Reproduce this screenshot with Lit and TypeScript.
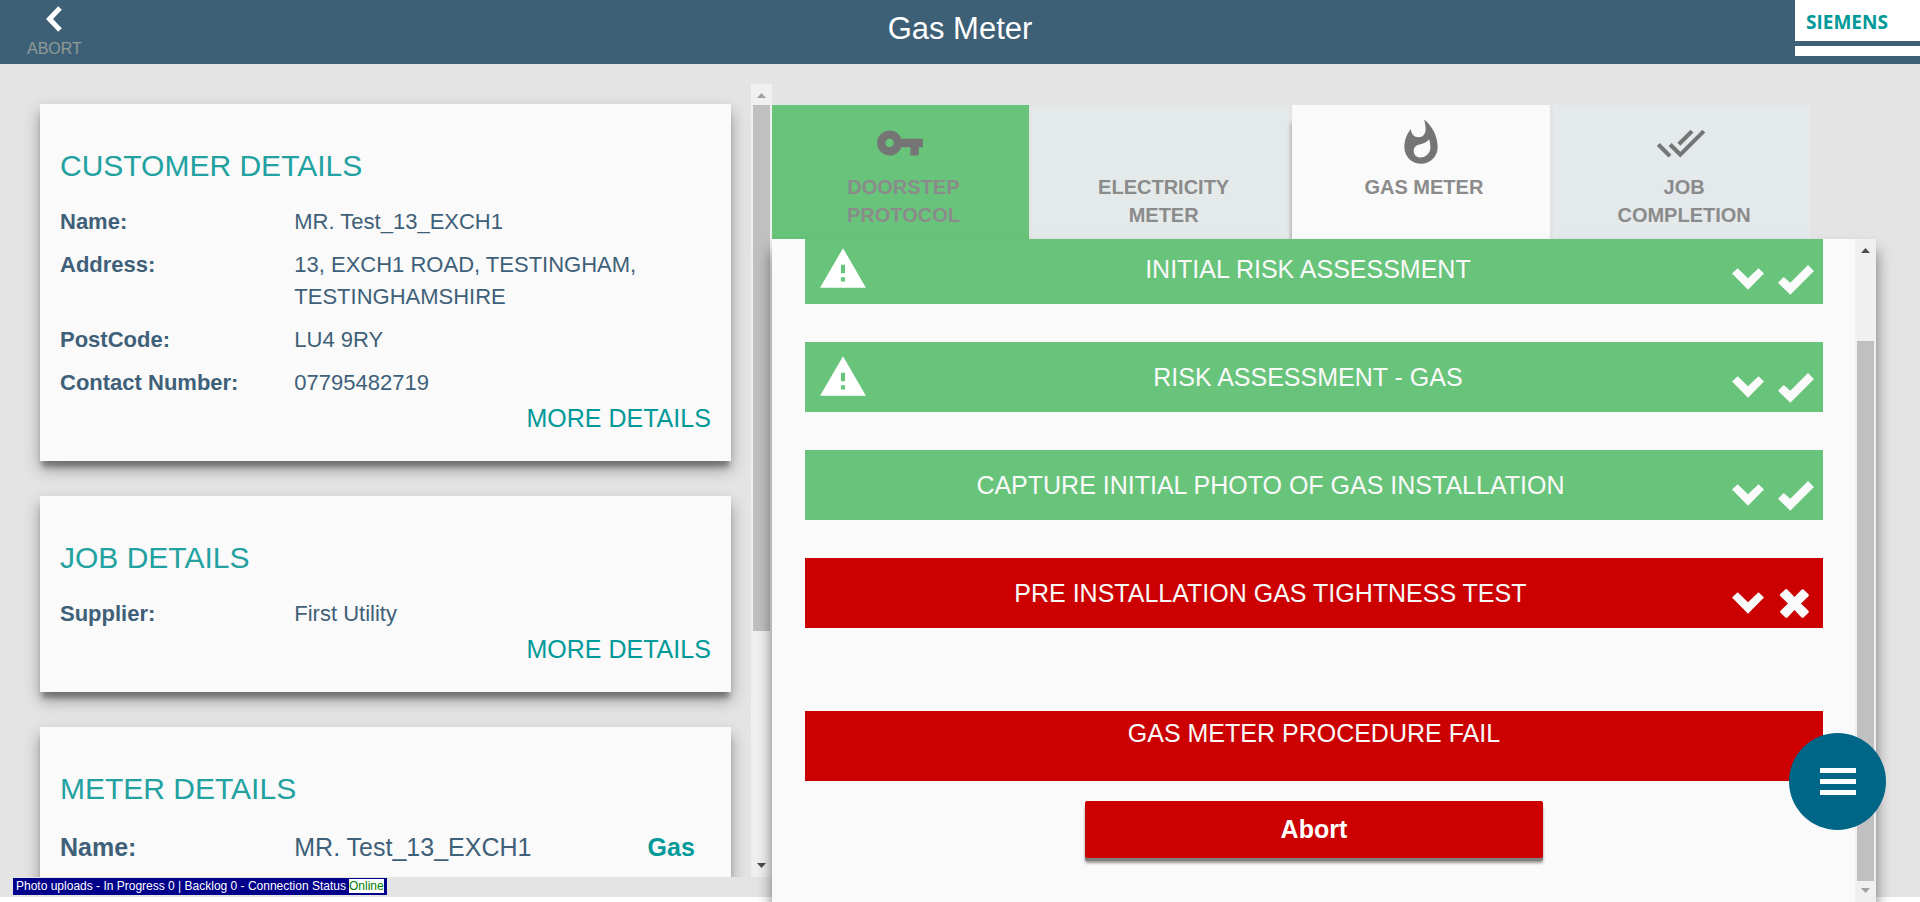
import { LitElement, html, css, svg, nothing } from "lit";
import { customElement, property, state } from "lit/decorators.js";
import { classMap } from "lit/directives/class-map.js";

type Status = "pass" | "fail";

interface Step {
  title: string;
  status: Status;
  warning: boolean;
}

interface Tab {
  label: string;
  icon: string;
  tone: string;
}

const TAB_ICONS: Record<string, string> = {
  key: "M12.65 10C11.83 7.67 9.61 6 7 6c-3.31 0-6 2.69-6 6s2.69 6 6 6c2.61 0 4.83-1.67 5.65-4H17v4h4v-4h2v-4H12.65zM7 14c-1.1 0-2-.9-2-2s.9-2 2-2 2 .9 2 2-.9 2-2 2z",
  flame:
    "M13.5.67s.74 2.65.74 4.8c0 2.06-1.35 3.73-3.41 3.73-2.07 0-3.63-1.67-3.63-3.73l.03-.36C5.21 7.51 4 10.62 4 14c0 4.42 3.58 8 8 8s8-3.58 8-8C20 8.61 17.41 3.8 13.5.67zM11.71 19c-1.78 0-3.22-1.4-3.22-3.14 0-1.62 1.05-2.76 2.81-3.12 1.77-.36 3.6-1.21 4.62-2.58.39 1.29.59 2.65.59 4.04 0 2.65-2.15 4.8-4.8 4.8z",
  done: "M18 7l-1.41-1.41-6.34 6.34 1.41 1.41L18 7zm4.24-1.41L11.66 16.17 7.48 12l-1.41 1.41L11.66 19l12-12-1.42-1.41zM.41 13.41L6 19l1.41-1.41L1.83 12 .41 13.41z",
};

@customElement("scroll-rail")
export class ScrollRail extends LitElement {
  @property() start = "top";

  static styles = css`
    :host {
      display: flex;
      flex-direction: column;
      flex: 0 0 21px;
      background: #f0f0f0;
    }
    .arrow {
      flex: 0 0 21px;
      display: block;
      fill: #4d4d4d;
    }
    .arrow.off {
      fill: #a0a0a0;
    }
    .track {
      flex: 1;
      display: flex;
      flex-direction: column;
      padding: 0 2px;
    }
    .thumb {
      background: #c0c0c0;
      flex: 0 0 70%;
    }
    .track.end {
      justify-content: flex-end;
    }
    .track.end .thumb {
      flex-basis: 87%;
    }
  `;

  render() {
    const end = this.start === "end";
    return html`
      <svg class=${classMap({ arrow: true, off: !end })} viewBox="0 0 21 21" width="21" height="21" aria-hidden="true">
        <path d="M6 14L10.500 9L15 14z" />
      </svg>
      <div class=${classMap({ track: true, end })}><div class="thumb"></div></div>
      <svg class=${classMap({ arrow: true, off: end })} viewBox="0 0 21 21" width="21" height="21" aria-hidden="true">
        <path d="M6 7L10.500 12L15 7z" />
      </svg>
    `;
  }
}

@customElement("detail-card")
export class DetailCard extends LitElement {
  @property() heading = "";
  @property({ type: Array }) rows: [string, string][] = [];
  @property() tag = "";

  static styles = css`
    :host {
      display: block;
      background: #fafafa;
      color: #3e6078;
      padding: 44px 20px 28px;
      box-shadow: 0 8px 5px -2px rgba(0, 0, 0, 0.3), 0 8px 15px rgba(0, 0, 0, 0.34);
    }
    h2 {
      margin: 0 0 22px;
      font-size: 30px;
      line-height: 36px;
      font-weight: 400;
      color: #22a1a1;
    }
    dl {
      margin: 0;
      display: flex;
      flex-direction: column;
      gap: 11px;
      font-size: 22px;
      line-height: 32px;
    }
    .row {
      display: flex;
    }
    dt {
      flex: 0 0 36%;
      font-weight: 700;
    }
    dd {
      flex: 1;
      margin: 0;
    }
    .large {
      font-size: 25px;
      padding-top: 2px;
    }
    .tag {
      flex: none;
      font-weight: 700;
      color: #099;
      padding-right: 16px;
    }
    .more {
      display: flex;
      justify-content: flex-end;
      padding-top: 4px;
      font-size: 25px;
      line-height: 30px;
    }
    a {
      color: #099;
      text-decoration: none;
    }
  `;

  render() {
    return html`
      <h2>${this.heading}</h2>
      <dl class=${this.tag ? "large" : ""}>
        ${this.rows.map(
          ([label, value]) => html`<div class="row">
            <dt>${label}</dt>
            <dd>${value}</dd>
            ${this.tag ? html`<dd class="tag">${this.tag}</dd>` : nothing}
          </div>`
        )}
      </dl>
      ${this.tag ? nothing : html`<div class="more"><a href="#details">MORE DETAILS</a></div>`}
    `;
  }
}

@customElement("app-root")
export class AppRoot extends LitElement {
  @state() private activeTab = 2;
  @state() private open = -1;

  private tabs: Tab[] = [
    { label: "DOORSTEP PROTOCOL", icon: "key", tone: "complete" },
    { label: "ELECTRICITY METER", icon: "", tone: "" },
    { label: "GAS METER", icon: "flame", tone: "" },
    { label: "JOB COMPLETION", icon: "done", tone: "cool" },
  ];

  private steps: Step[] = [
    { title: "INITIAL RISK ASSESSMENT", status: "pass", warning: true },
    { title: "RISK ASSESSMENT - GAS", status: "pass", warning: true },
    { title: "CAPTURE INITIAL PHOTO OF GAS INSTALLATION", status: "pass", warning: false },
    { title: "PRE INSTALLATION GAS TIGHTNESS TEST", status: "fail", warning: false },
  ];

  static styles = css`
    :host {
      display: flex;
      flex-direction: column;
      height: 100vh;
      overflow: hidden;
      font-family: "Liberation Sans", Arial, sans-serif;
      background: #fff;
    }
    button {
      font: inherit;
      border: 0;
      margin: 0;
      padding: 0;
      cursor: pointer;
    }
    svg {
      display: block;
    }
    header {
      flex: 0 0 64px;
      display: grid;
      grid-template-columns: 1fr auto 1fr;
      background: #3e6077;
      color: #fff;
    }
    .back {
      justify-self: start;
      align-self: start;
      display: flex;
      flex-direction: column;
      align-items: center;
      gap: 7px;
      padding: 6px 0 0 27px;
      background: none;
      color: #8f9a97;
      font-size: 16px;
      line-height: 20px;
    }
    .back svg {
      fill: none;
      stroke: #fff;
      stroke-width: 5;
    }
    h1 {
      margin: 0;
      font-size: 31px;
      line-height: 58px;
      font-weight: 400;
    }
    .logo {
      justify-self: end;
      align-self: start;
      width: 125px;
      display: flex;
      flex-direction: column;
      gap: 5px;
    }
    .logo .name {
      background: #fff;
      color: #099;
      font: 700 19px/45px "Open Sans", "Noto Sans", sans-serif;
      height: 41px;
      padding-left: 11px;
    }
    .logo .foot {
      background: #fff;
      height: 10px;
    }
    main {
      flex: 1;
      min-height: 0;
      display: flex;
      background: linear-gradient(#fff, #fff) bottom / 100% 5px no-repeat, #e4e4e4;
    }
    .side {
      flex: 0 0 40.2%;
      box-sizing: border-box;
      display: flex;
      margin: 20px 0 25px;
      overflow: hidden;
    }
    .cards {
      flex: 1;
      display: flex;
      flex-direction: column;
      gap: 35px;
      padding: 20px 20px 0 40px;
    }
    .cards detail-card {
      flex: none;
    }
    .work {
      flex: 1;
      display: flex;
      flex-direction: column;
      padding: 41px 44px 0 0;
    }
    .tabs {
      width: 94%;
      display: grid;
      grid-template-columns: repeat(4, 1fr);
      gap: 3px;
    }
    .tab {
      display: flex;
      flex-direction: column;
      align-items: center;
      height: 134px;
      padding-top: 13px;
      gap: 5px;
      background: #e4eaea;
      color: #8b8b8b;
      font-size: 20px;
      line-height: 28px;
      font-weight: 700;
    }
    .tab svg,
    .tab .blank {
      width: 50px;
      height: 50px;
      fill: #757575;
    }
    .tab .label {
      padding: 0 37px 0 43px;
    }
    .tab.complete {
      background: #68c47a;
    }
    .tab.cool {
      background: #e4e9eb;
    }
    .tab.active {
      background: #fafafa;
      box-shadow: -3px 16px 4px -2px rgba(0, 0, 0, 0.25);
    }
    .panel {
      flex: 1;
      min-height: 0;
      display: flex;
      background: #fafafa;
      box-shadow: 0 12px 14px rgba(0, 0, 0, 0.5);
    }
    .view {
      flex: 1;
      overflow: hidden;
      padding: 0 32px 0 33px;
    }
    .steps {
      list-style: none;
      margin: -5px 0 83px;
      padding: 0;
      display: flex;
      flex-direction: column;
      gap: 38px;
    }
    .step {
      width: 100%;
      height: 70px;
      display: flex;
      align-items: center;
      padding: 0 9px 0 4px;
      color: #fafafa;
      font-size: 25px;
      line-height: 30px;
      background: #68c47a;
    }
    .step.fail,
    .verdict,
    .abort {
      background: #c00;
    }
    .step .warn {
      flex: 0 0 75px;
      padding-left: 9px;
      box-sizing: border-box;
      fill: #fff;
    }
    .step .title {
      flex: 1;
    }
    .marks {
      display: flex;
      gap: 14px;
      align-self: flex-end;
      padding-bottom: 8px;
      fill: #fafafa;
    }
    .verdict {
      margin: 0 0 20px;
      box-sizing: border-box;
      height: 70px;
      padding-top: 7px;
      color: #fafafa;
      text-align: center;
      font-size: 25px;
      line-height: 30px;
    }
    .abort {
      display: block;
      margin: 0 auto;
      width: 45%;
      height: 57px;
      border-radius: 2px;
      color: #fff;
      font-size: 25px;
      font-weight: 700;
      box-shadow: 0 3px 0 #808080, 0 5px 3px rgba(0, 0, 0, 0.4);
    }
    .menu {
      position: fixed;
      right: 34px;
      bottom: 72px;
      width: 97px;
      height: 97px;
      border-radius: 50%;
      background: #006687;
      display: grid;
      place-items: center;
      fill: #fff;
    }
    .status {
      position: fixed;
      left: 13px;
      bottom: 7px;
      display: flex;
      gap: 3px;
      padding: 1px 3px 2px;
      background: #00008b;
      color: #fff;
      font-size: 12px;
      line-height: 14px;
    }
    .online {
      background: #fff;
      color: green;
    }
  `;

  private mark(status: Status) {
    return status === "pass"
      ? svg`<path d="M0 18.700L5.700 13L12.300 18.700L30 1L36 7L12.300 30.700z" />`
      : svg`<path d="M2 6.200L7.500 1.200Q8.500 .700 9.500 1.700L16.500 9L23.500 1.700Q24.500 .700 25.500 1.600L30.500 6.200Q31.300 7.200 30.500 8.200L23 15.500L30.500 22.800Q31.300 23.800 30.500 24.700L25.500 29.500Q24.500 30.300 23.500 29.400L16.500 22L9.500 29.400Q8.500 30.300 7.500 29.500L2.500 24.700Q1.700 23.800 2.500 22.800L10 15.500L2.500 8.200Q1.500 7.200 2 6.200z" />`;
  }

  private renderStep(step: Step, i: number) {
    return html`<li>
      <button
        class=${classMap({ step: true, fail: step.status === "fail" })}
        aria-expanded=${this.open === i}
        @click=${() => (this.open = this.open === i ? -1 : i)}
      >
        ${step.warning
          ? html`<span class="warn"
              ><svg viewBox="0 0 24 24" width="50" height="50" aria-hidden="true">
                <path d="M1 21h22L12 2 1 21zm12-3h-2v-2h2v2zm0-4h-2v-4h2v4z" /></svg
            ></span>`
          : nothing}
        <span class="title">${step.title}</span>
        <span class="marks">
          <svg viewBox="0 0 32 32" width="32" height="32" aria-hidden="true">
            <path d="M0 9.600L5.700 4.300L16 14.300L26.500 4.300L32 9.600L16 25.700z" />
          </svg>
          <svg viewBox="0 0 36 32" width="36" height="32" role="img" aria-label=${step.status}>
            ${this.mark(step.status)}
          </svg>
        </span>
      </button>
    </li>`;
  }

  render() {
    return html`
      <header>
        <button class="back">
          <svg viewBox="0 0 16 26" width="16" height="26" aria-hidden="true">
            <path d="M14 2L3.500 13L14 24" />
          </svg>
          ABORT
        </button>
        <h1>Gas Meter</h1>
        <div class="logo">
          <div class="name">SIEMENS</div>
          <div class="foot"></div>
        </div>
      </header>
      <main>
        <section class="side">
          <div class="cards">
            <detail-card
              heading="CUSTOMER DETAILS"
              .rows=${[
                ["Name:", "MR. Test_13_EXCH1"],
                ["Address:", "13, EXCH1 ROAD, TESTINGHAM, TESTINGHAMSHIRE"],
                ["PostCode:", "LU4 9RY"],
                ["Contact Number:", "07795482719"],
              ]}
            ></detail-card>
            <detail-card heading="JOB DETAILS" .rows=${[["Supplier:", "First Utility"]]}></detail-card>
            <detail-card heading="METER DETAILS" tag="Gas" .rows=${[["Name:", "MR. Test_13_EXCH1"]]}></detail-card>
          </div>
          <scroll-rail></scroll-rail>
        </section>
        <section class="work">
          <div class="tabs" role="tablist">
            ${this.tabs.map(
              (tab, i) => html`<button
                role="tab"
                aria-selected=${this.activeTab === i}
                class="tab ${tab.tone} ${this.activeTab === i ? "active" : ""}"
                @click=${() => (this.activeTab = i)}
              >
                ${tab.icon
                  ? html`<svg viewBox="0 0 24 24" aria-hidden="true"><path d=${TAB_ICONS[tab.icon]} /></svg>`
                  : html`<span class="blank"></span>`}
                <span class="label">${tab.label}</span>
              </button>`
            )}
          </div>
          <div class="panel">
            <div class="view">
              <ul class="steps">
                ${this.steps.map((step, i) => this.renderStep(step, i))}
              </ul>
              <p class="verdict">GAS METER PROCEDURE FAIL</p>
              <button class="abort">Abort</button>
            </div>
            <scroll-rail start="end"></scroll-rail>
          </div>
        </section>
      </main>
      <div class="status" role="status">
        <span>Photo uploads - In Progress 0 | Backlog 0 - Connection Status</span>
        <span class="online">Online</span>
      </div>
      <button class="menu" aria-label="Menu">
        <svg viewBox="0 0 36 28" width="36" height="28" aria-hidden="true">
          <path d="M0 0h36v5H0zM0 11h36v5H0zM0 22h36v5H0z" />
        </svg>
      </button>
    `;
  }
}
